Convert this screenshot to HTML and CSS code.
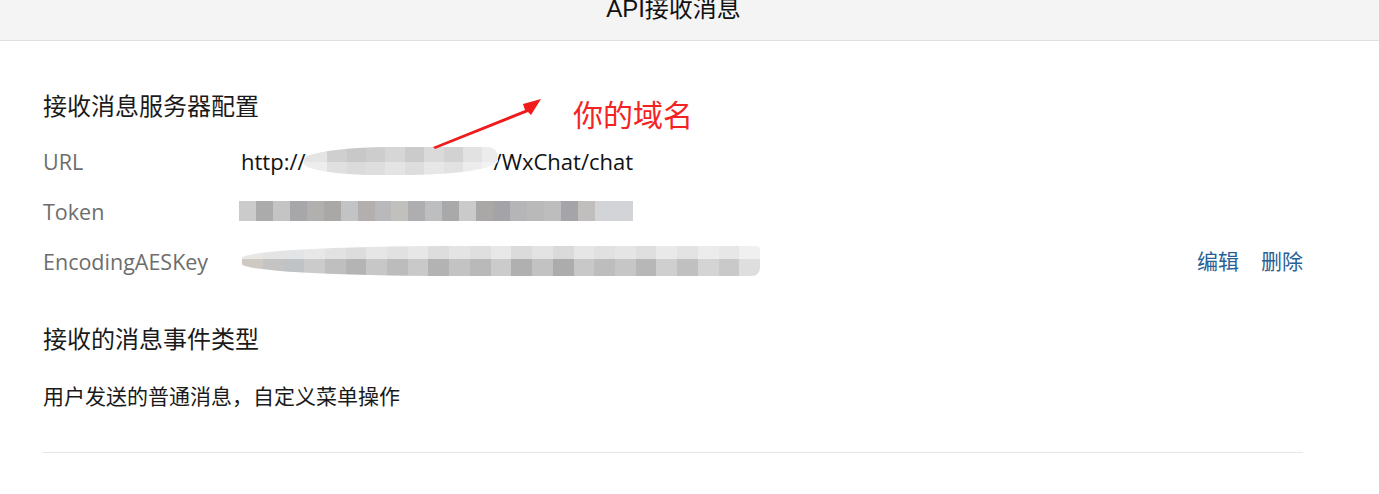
FILE: index.html
```html
<!DOCTYPE html>
<html lang="zh-CN">
<head>
<meta charset="utf-8">
<title>API接收消息</title>
<link rel="stylesheet" href="styles.css">
</head>
<body>
<header class="topbar">
  <div class="topbar-title">API接收消息</div>
</header>
<main class="content">
  <section class="config">
    <h2 class="section-title">接收消息服务器配置</h2>
    <div class="rows">
      <div class="row">
        <div class="label">URL</div>
        <div class="value"><span>http://</span><span class="mosaic mosaic-url"></span><span>/WxChat/chat</span></div>
      </div>
      <div class="row">
        <div class="label">Token</div>
        <div class="value"><span class="mosaic mosaic-token"></span></div>
      </div>
      <div class="row">
        <div class="label">EncodingAESKey</div>
        <div class="value"><span class="mosaic mosaic-key"></span></div>
        <div class="actions"><a class="link">编辑</a><a class="link">删除</a></div>
      </div>
    </div>
  </section>
  <section class="events">
    <h2 class="section-title">接收的消息事件类型</h2>
    <p class="desc">用户发送的普通消息，自定义菜单操作</p>
  </section>
  <hr class="divider">

  <div class="annotation">
    <svg class="arrow" width="120" height="60" viewBox="0 0 120 60">
      <polygon points="0,49 92,12 90,6 108,1 98,17 95,14 2,51" fill="#f01c1c"/>
    </svg>
    <span class="note">你的域名</span>
  </div>
</main>
</body>
</html>
```

FILE: styles.css
```css
* { box-sizing: border-box; }
html, body { margin: 0; padding: 0; background: #ffffff; }
body {
  font-family: "Open Sans", "Noto Sans CJK SC", sans-serif;
  color: #222222;
  width: 1379px;
  height: 494px;
  overflow: hidden;
}
.topbar {
  height: 41px;
  background: #f4f4f4;
  border-bottom: 1px solid #dedfe2;
  display: flex;
  justify-content: center;
}
.topbar-title {
  font-family: "Liberation Sans", "Noto Sans CJK SC", sans-serif;
  font-size: 24px;
  line-height: 24px;
  color: #111111;
  margin-top: -3px;
  margin-left: -32px;
}
.content {
  position: relative;
  display: flow-root;
  margin-left: 43px;
  width: 1260px;
}
.section-title {
  margin: 0;
  font-weight: normal;
  font-family: "Noto Sans CJK SC", sans-serif;
  font-size: 24px;
  line-height: 30px;
  color: #1a1a1a;
}
.config .section-title { margin-top: 49px; }
.rows { margin-top: 16px; display: flex; flex-direction: column; }
.row {
  height: 50px;
  display: flex;
  align-items: center;
  font-size: 21px;
}
.label {
  width: 198px;
  color: #6d6d6d;
  font-family: "Open Sans", "Noto Sans CJK SC", sans-serif;
  font-size: 21.5px;
}
.value {
  flex: 1;
  display: flex;
  align-items: center;
  color: #111111;
  font-family: "Open Sans", sans-serif;
  font-size: 22px;
}
.mosaic {
  display: inline-block;
  filter: blur(0.6px);
}
.mosaic-url {
  width: 194px;
  height: 28px;
  margin: 0 -4px 0 -2px;
  border-radius: 45% 10px 50% 40%;
  background:
    linear-gradient(to bottom, transparent 0, transparent 55%, rgba(255,255,255,0.35) 55%),
    linear-gradient(to right, #e4e4e4 0 12%, #cfcfcf 12% 22%, #c8c8c8 22% 32%, #cdcdcd 32% 42%, #d6d6d6 42% 52%, #cbcbcb 52% 62%, #dadada 62% 72%, #d2d2d2 72% 82%, #e2e2e2 82% 92%, #ececec 92% 100%);
}
.mosaic-token {
  width: 394px;
  height: 20px;
  margin-left: -2px;
  background: linear-gradient(to right,
    #cbcbcb 0 4.3%, #ababab 4.3% 8.6%, #c4c4c4 8.6% 12.9%, #a7a7a9 12.9% 17.2%, #b1b0ae 17.2% 21.5%,
    #a9a8a6 21.5% 25.8%, #c2c3c5 25.8% 30.1%, #b2afae 30.1% 34.4%, #b9b9bb 34.4% 38.7%, #c2c0bc 38.7% 43%,
    #aeaeb0 43% 47.3%, #bcbec0 47.3% 51.6%, #a9a9a9 51.6% 55.9%, #cacaca 55.9% 60.2%, #a9a8a6 60.2% 64.5%,
    #a4a3a8 64.5% 68.8%, #b5b5b7 68.8% 73.1%, #b9b9b9 73.1% 77.4%, #bdbdbd 77.4% 81.7%, #a5a5a9 81.7% 86%,
    #c1bfbd 86% 90.3%, #d3d4d8 90.3% 100%);
}
.mosaic-key {
  width: 518px;
  height: 30px;
  margin-left: 1px;
  border-radius: 40% 4px 8px 40%;
  background:
    linear-gradient(to bottom, rgba(255,255,255,0.55) 0 45%, transparent 45% 100%),
    linear-gradient(to right,
      #cfc9c4 0 4%, #c4c4c4 4% 8%, #bfc3c6 8% 12%, #cbcbcb 12% 16%, #bfbfbf 16% 20%, #b4b4b4 20% 24%,
      #c7c7c7 24% 28%, #bcbcbc 28% 32%, #c9c9c9 32% 36%, #b3b3b3 36% 40%, #c3c3c3 40% 44%, #b9b9b9 44% 48%,
      #cbcbcb 48% 52%, #b0b0b0 52% 56%, #c2c2c2 56% 60%, #acacac 60% 64%, #c8c8c8 64% 68%, #bdbdbd 68% 72%,
      #c6c6c6 72% 76%, #b7b7b7 76% 80%, #cfcfcf 80% 84%, #c0c0c0 84% 88%, #d4d4d4 88% 92%, #c9c9c9 92% 96%, #dedede 96% 100%);
}
.actions {
  display: flex;
  gap: 22px;
  font-family: "Noto Sans CJK SC", sans-serif;
  font-size: 21px;
  margin-top: -2px;
}
.link { color: #285f96; text-decoration: none; cursor: pointer; }
.events .section-title { margin-top: 37px; }
.desc {
  margin: 27px 0 0;
  font-family: "Noto Sans CJK SC", sans-serif;
  font-size: 21px;
  line-height: 30px;
  color: #1a1a1a;
}
.divider {
  margin: 42px 0 0;
  border: 0;
  border-top: 1px solid #e6e6e6;
  height: 0;
}
.annotation {
  position: absolute;
  left: 390px;
  top: 52px;
  display: flex;
  align-items: flex-start;
}
.arrow { margin-top: 5px; }
.note {
  margin-left: 20px;
  font-family: "Noto Sans CJK SC", sans-serif;
  font-size: 30px;
  line-height: 40px;
  color: #f42323;
}
```
